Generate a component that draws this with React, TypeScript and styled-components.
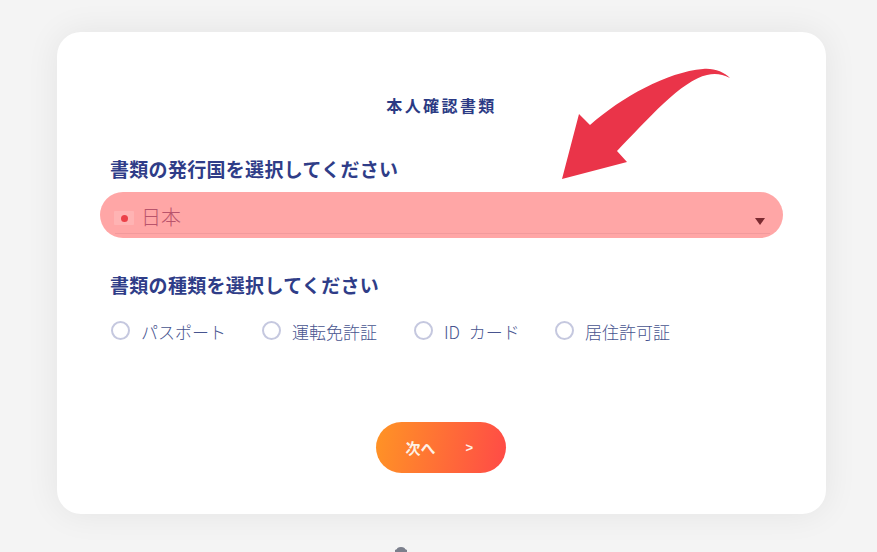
import styled, { createGlobalStyle } from "styled-components";

const GlobalStyle = createGlobalStyle`
  html, body {
    margin: 0;
    height: 100%;
    overflow: hidden;
    background: #f4f4f4;
  }
  body {
    font-family: "Noto Sans CJK JP", "Noto Sans", sans-serif;
  }
`;

const Page = styled.main`
  display: flex;
  flex-direction: column;
  align-items: flex-start;
  width: 877px;
  height: 552px;
  padding: 32px 0 0 57px;
  box-sizing: border-box;
  overflow: hidden;
`;

const Card = styled.section`
  position: relative;
  flex: none;
  width: 769px;
  height: 482px;
  padding: 0 43px;
  box-sizing: border-box;
  background: #fff;
  border-radius: 24px;
  box-shadow: 0 0 34px rgba(0, 0, 0, 0.07);
`;

const Title = styled.h1`
  margin: 0;
  padding-top: 63px;
  font-size: 16px;
  line-height: 20px;
  font-weight: 700;
  letter-spacing: 2.4px;
  text-align: center;
  color: #2b3a84;
`;

const Label = styled.h2<{ $top: number }>`
  margin: ${(p) => p.$top}px 0 0;
  padding-left: 10px;
  font-size: 19px;
  line-height: 26px;
  font-weight: 700;
  letter-spacing: 0.3px;
  color: #2f3d88;
`;

const Select = styled.div`
  position: relative;
  display: flex;
  align-items: center;
  height: 46px;
  margin-top: 10px;
  padding: 0 18px 0 14px;
  box-sizing: border-box;
  background: #ffa6a6;
  border-radius: 23px;
`;

const Underline = styled.span`
  position: absolute;
  left: 15px;
  right: 13px;
  bottom: 4px;
  height: 1px;
  background: #f29a9c;
`;

const Flag = styled.span`
  display: flex;
  align-items: center;
  justify-content: center;
  width: 20px;
  height: 14px;
  margin-top: 6px;
  background: #ffb3b3;
  border-radius: 1px;

  &::after {
    content: "";
    width: 7px;
    height: 7px;
    border-radius: 50%;
    background: #ec4048;
  }
`;

const SelectValue = styled.span`
  margin: 3px 0 0 7px;
  font-size: 20px;
  line-height: 26px;
  font-weight: 300;
  color: #b9546c;
`;

const Caret = styled.span`
  margin: 13px 0 0 auto;
  border-top: 7px solid #7a2a30;
  border-left: 5.5px solid transparent;
  border-right: 5.5px solid transparent;
`;

const RadioRow = styled.div`
  display: flex;
  align-items: center;
  margin-top: 22px;
  padding-left: 11px;
`;

const RadioItem = styled.label<{ $width: number }>`
  display: flex;
  align-items: center;
  flex: none;
  width: ${(p) => p.$width}px;
  color: #47548f;
  font-size: 17px;
  line-height: 24px;
  font-weight: 300;
  word-spacing: 5px;
`;

const RadioCircle = styled.span`
  flex: none;
  width: 15px;
  height: 15px;
  margin: -3px 11px 0 0;
  border: 2px solid #c5c8df;
  border-radius: 50%;
  background: #fff;
`;

const Actions = styled.div`
  display: flex;
  justify-content: center;
  margin-top: 78px;
  padding-right: 2px;
`;

const NextButton = styled.button`
  display: flex;
  align-items: center;
  width: 130px;
  height: 51px;
  padding: 0 0 0 30px;
  border: 0;
  border-radius: 26px;
  background: linear-gradient(100deg, #ff9425 0%, #ff4a47 100%);
  color: #fdf1e6;
  font-family: inherit;
  font-size: 15px;
  font-weight: 700;
`;

const NextChevron = styled.span`
  margin-left: 30px;
  font-family: "Liberation Sans", sans-serif;
  font-size: 13px;
`;

const ArrowMark = styled.svg`
  position: absolute;
  left: 0;
  top: 0;
  pointer-events: none;
`;

const FooterIcon = styled.svg`
  flex: none;
  margin: 33px 0 0 337px;
`;

const radios = [
  { text: "パスポート", width: 151 },
  { text: "運転免許証", width: 152 },
  { text: "ID カード", width: 141 },
  { text: "居住許可証", width: 130 },
];

export default function App() {
  return (
    <Page>
      <GlobalStyle />
      <Card>
        <Title>本人確認書類</Title>
        <Label $top={41}>書類の発行国を選択してください</Label>
        <Select>
          <Flag />
          <SelectValue>日本</SelectValue>
          <Caret />
          <Underline />
        </Select>
        <Label $top={34}>書類の種類を選択してください</Label>
        <RadioRow>
          {radios.map((r) => (
            <RadioItem key={r.text} $width={r.width}>
              <RadioCircle />
              {r.text}
            </RadioItem>
          ))}
        </RadioRow>
        <Actions>
          <NextButton>
            次へ
            <NextChevron>&gt;</NextChevron>
          </NextButton>
        </Actions>
        {/* hand drawn arrow pointing at the select */}
        <ArrowMark width="769" height="482" viewBox="0 0 769 482">
          <path
            d="M505 147 L522 82 L533 93 C565 65 610 40 646 37 C657 36 667 40 673 46 C665 42 658 41 650 43 C625 48 590 88 560 119 L570 130 Z"
            fill="#ea3449"
          />
        </ArrowMark>
      </Card>
      <FooterIcon width="14" height="6" viewBox="0 0 14 6">
        <path d="M3 2 C3 1 4 0 7 0 C10 0 11 1 11 2 L13 3 V6 H1 V3 Z" fill="#7b7f8c" />
      </FooterIcon>
    </Page>
  );
}
